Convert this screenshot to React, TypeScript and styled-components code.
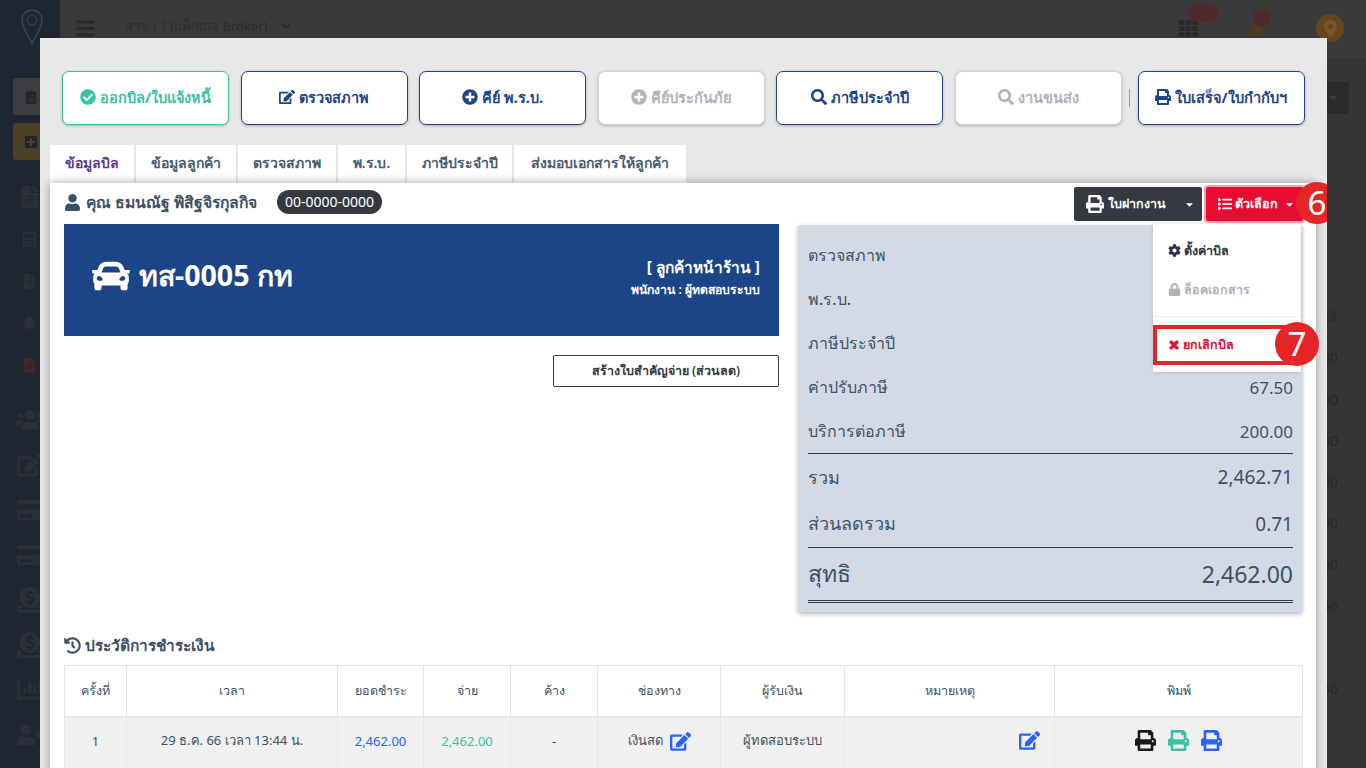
import React from 'react'
import styled, { createGlobalStyle } from 'styled-components'
import {
  FaBars, FaBell, FaCalculator, FaCar, FaCaretDown, FaChartBar, FaCheckCircle, FaChevronDown, FaClipboardList, FaCog,
  FaCreditCard, FaDonate, FaEdit, FaFileAlt, FaHistory, FaList, FaLock, FaMapMarkerAlt, FaPlusCircle, FaPlusSquare,
  FaPrint, FaSearch, FaTh, FaTimes, FaUser, FaUserPlus, FaUsers,
} from 'react-icons/fa'

const GlobalStyle = createGlobalStyle`
  html, body { margin: 0; padding: 0; height: 100%; }
  body { font-family: "Noto Sans", "Open Sans", "Liberation Sans", sans-serif; overflow: hidden; }
  * { box-sizing: border-box; }
`

const navy = '#1c4587'
const green = '#3cc2a3'
const slate = '#3d5166'
const muted = '#adb3b9'

const Page = styled.div`
  display: flex;
  width: 1366px;
  height: 768px;
  overflow: hidden;
  background: #343534;
`
const Sidebar = styled.aside`
  width: 60px;
  flex: none;
  background: #1e2631;
  display: flex;
  flex-direction: column;
  color: #2c3036;
`
const SideLogo = styled.div`
  height: 78px;
  padding: 9px 0 0 21px;
`
const SideBlock = styled.div<{ $bg: string }>`
  width: 47px;
  height: 37px;
  margin: 0 0 8px 13px;
  background: ${p => p.$bg};
  border-radius: 3px;
  display: flex;
  align-items: center;
  padding-left: 11px;
  font-size: 14px;
  color: #22262a;
`
const SideGroup = styled.div<{ $top: number }>`
  margin-top: ${p => p.$top}px;
`
const SideRow = styled.div<{ $h: number; $size: number; $tone?: string }>`
  height: ${p => p.$h}px;
  display: flex;
  align-items: center;
  justify-content: center;
  width: 60px;
  padding-right: ${p => (p.$size > 20 ? 0 : 1)}px;
  font-size: ${p => p.$size}px;
  color: ${p => p.$tone ?? 'inherit'};
`
const Main = styled.div`
  flex: 1;
  display: flex;
  flex-direction: column;
`
const TopBar = styled.header`
  height: 58px;
  flex: none;
  background: #3a3a3a;
  display: flex;
  align-items: flex-start;
  padding: 15px 22px 0 15px;
  color: #2a2a2a;
`
const Burger = styled.div`
  font-size: 21px;
  margin-top: 2px;
  margin-right: 29px;
`
const Branch = styled.div`
  font-size: 13px;
  line-height: 22px;
  margin-right: 14px;
  color: #2c2c2c;
`
const TopSpacer = styled.div`
  flex: 1;
`
const TopIcon = styled.div<{ $color: string; $right: number }>`
  position: relative;
  margin-right: ${p => p.$right}px;
  margin-top: 3px;
  font-size: 19px;
  color: ${p => p.$color};
`
const TopBadge = styled.span<{ $left: number; $top: number }>`
  position: absolute;
  left: ${p => p.$left}px;
  top: ${p => p.$top}px;
  min-width: 18px;
  height: 18px;
  padding: 0 6px;
  border-radius: 9px;
  background: #51282b;
  color: #3a3030;
  font-size: 10px;
  line-height: 18px;
  text-align: center;
  white-space: nowrap;
`
const Avatar = styled.div`
  width: 28px;
  height: 28px;
  margin-top: -1px;
  border-radius: 50%;
  background: #66451f;
  display: flex;
  align-items: center;
  justify-content: center;
  color: #7a5627;
  font-size: 17px;
`
const BackBody = styled.div`
  flex: 1;
  display: flex;
  flex-direction: column;
  align-items: flex-end;
  padding: 24px 17px 0 0;
`
const BackButton = styled.div`
  width: 60px;
  height: 32px;
  background: #2a2b2a;
  border-radius: 2px;
  display: flex;
  justify-content: flex-end;
  padding: 9px 9px 0 0;
  color: #3d3d3d;
  font-size: 13px;
`
const BackValues = styled.div`
  margin-top: 182px;
  padding-right: 11px;
  display: flex;
  flex-direction: column;
  align-items: flex-end;
  color: #272827;
  font-size: 14px;
  line-height: 41.3px;
`

const Modal = styled.section`
  position: fixed;
  left: 40px;
  top: 38px;
  width: 1287px;
  height: 730px;
  overflow: hidden;
  background: #e8e8e8;
  padding-top: 33px;
`
const Toolbar = styled.div`
  display: flex;
  align-items: center;
  gap: 11.5px;
  padding-left: 22px;
`
const ActionButton = styled.button<{ $tone: string; $faded?: boolean }>`
  flex: none;
  width: 167px;
  height: 54px;
  display: flex;
  align-items: center;
  justify-content: center;
  gap: 4px;
  background: #fff;
  border: 1px solid ${p => (p.$faded ? '#d3d3d3' : p.$tone)};
  border-radius: 7px;
  box-shadow: 0 1px 3px rgba(0, 0, 0, 0.25);
  color: ${p => p.$tone};
  font: 700 14.5px "Noto Sans", "Open Sans", sans-serif;
  padding: 0 0 2px;
  white-space: nowrap;
  svg { font-size: 16px; flex: none; }
`
const ToolDivider = styled.span`
  width: 1px;
  height: 18px;
  background: #9a9a9a;
  margin: 0 -4px;
`
const Tabs = styled.nav`
  display: flex;
  gap: 2px;
  margin: 20px 0 0 10px;
`
const Tab = styled.div<{ $active?: boolean; $w: number }>`
  width: ${p => p.$w}px;
  height: 38px;
  flex: none;
  background: #fff;
  color: ${p => (p.$active ? '#5b3b98' : '#4a5b72')};
  font-size: 14px;
  font-weight: ${p => (p.$active ? 700 : 600)};
  line-height: 36px;
  text-align: center;
  white-space: nowrap;
`
const Panel = styled.div`
  width: 1266px;
  margin-left: 10px;
  height: 600px;
  background: #fff;
  box-shadow: 0 0 9px rgba(0, 0, 0, 0.35);
  padding: 4px 13px 0 14px;
  position: relative;
`
const NameRow = styled.div`
  height: 34px;
  display: flex;
  align-items: center;
  margin-bottom: 3px;
`
const CustomerName = styled.h2`
  margin: 0 0 4px;
  display: flex;
  align-items: center;
  gap: 5px;
  width: 193px;
  color: ${slate};
  font-size: 15.7px;
  font-weight: 700;
  line-height: 24px;
  white-space: nowrap;
  svg { font-size: 17px; flex: none; }
`
const PhonePill = styled.span`
  margin: 0 0 4px 20px;
  width: 105px;
  height: 24px;
  border-radius: 12px;
  background: #343a40;
  color: #fff;
  font-size: 14px;
  line-height: 24px;
  text-align: center;
`
const RowActions = styled.div`
  margin-left: auto;
  display: flex;
  gap: 4px;
`
const PrintGroup = styled.button`
  width: 128px;
  height: 34px;
  background: #343a40;
  color: #fff;
  border: 0;
  border-radius: 2px;
  display: flex;
  align-items: center;
  padding: 0 7px 0 12px;
  font: 600 12.5px "Noto Sans", sans-serif;
  gap: 4px;
  svg:first-child { font-size: 18px; }
  svg:last-child { margin-left: auto; font-size: 11px; }
`
const OptionsWrap = styled.div`
  position: relative;
`
const OptionsButton = styled.button`
  width: 97px;
  height: 34px;
  background: #e80c35;
  color: #fff;
  border: 0;
  border-radius: 2px;
  box-shadow: 0 0 0 2px #f9a3ad;
  display: flex;
  align-items: center;
  padding: 0 0 0 12px;
  gap: 3px;
  font: 700 12.5px "Noto Sans", sans-serif;
  svg:first-child { font-size: 14px; }
  svg:last-child { font-size: 11px; margin-left: 3px; }
`
const Marker = styled.span<{ $x: number; $y: number; $d: number }>`
  position: absolute;
  left: ${p => p.$x}px;
  top: ${p => p.$y}px;
  width: ${p => p.$d}px;
  height: ${p => p.$d}px;
  border-radius: 50%;
  background: #e52528;
  color: #fff;
  font: 400 33px/${p => p.$d}px "Noto Sans", sans-serif;
  text-align: center;
  z-index: 3;
`
const Menu = styled.div`
  position: absolute;
  left: -53px;
  top: 37px;
  width: 148px;
  height: 148px;
  background: #fff;
  box-shadow: 0 1px 3px rgba(0, 0, 0, 0.12);
  padding-top: 7px;
  z-index: 2;
`
const MenuItem = styled.div<{ $tone: string; $h: number }>`
  height: ${p => p.$h}px;
  padding-left: 15px;
  display: flex;
  align-items: center;
  gap: 3px;
  color: ${p => p.$tone};
  font-size: 12.5px;
  font-weight: 600;
  svg { font-size: 13px; }
`
const MenuDivider = styled.div`
  height: 1px;
  margin-top: 7px;
  background: #f2f2f2;
`
const CancelItem = styled.div`
  height: 40px;
  width: 142px;
  margin-top: 8px;
  border: 4px solid #e52528;
  border-right-width: 0;
  padding-left: 11px;
  display: flex;
  align-items: center;
  gap: 3px;
  color: #e80c35;
  font-size: 12.5px;
  font-weight: 700;
  svg { font-size: 12px; stroke: currentColor; stroke-width: 50; }
`
const Columns = styled.div`
  display: grid;
  grid-template-columns: 715px 504px;
  column-gap: 19px;
  height: 388px;
`
const PlateCard = styled.div`
  height: 112px;
  background: ${navy};
  color: #fff;
  display: flex;
  align-items: center;
  justify-content: space-between;
  padding: 0 19px 0 28px;
`
const PlateTitle = styled.div`
  display: flex;
  align-items: center;
  gap: 9px;
  font-size: 28.6px;
  font-weight: 700;
  margin-bottom: 8px;
  svg { font-size: 38px; }
`
const PlateInfo = styled.div`
  text-align: right;
  margin-bottom: 4px;
`
const PlateCustomer = styled.div`
  font-size: 15.5px;
  font-weight: 700;
  line-height: 24px;
`
const PlateStaff = styled.div`
  font-size: 12.2px;
  font-weight: 600;
  line-height: 22px;
`
const VoucherRow = styled.div`
  display: flex;
  justify-content: flex-end;
  margin-top: 19px;
`
const VoucherButton = styled.button`
  width: 226px;
  height: 32px;
  background: #fff;
  border: 1px solid #343a40;
  border-radius: 2px;
  color: #343a40;
  font: 600 12.5px "Noto Sans", sans-serif;
`
const Summary = styled.div`
  margin-top: 1px;
  height: 387px;
  background: #d3dae6;
  box-shadow: 0 2px 5px rgba(0, 0, 0, 0.3);
  border-radius: 2px;
  padding: 8px 9px 0 10px;
  color: ${slate};
`
const SummaryRow = styled.div<{ $h: number; $size: number; $line?: string }>`
  height: ${p => p.$h}px;
  display: flex;
  align-items: center;
  justify-content: space-between;
  font-size: ${p => p.$size}px;
  font-weight: 500;
  border-bottom: ${p => p.$line ?? 'none'};
`
const Amount = styled.span<{ $size: number }>`
  font-size: ${p => p.$size}px;
  font-weight: 400;
`
const HistoryTitle = styled.h3`
  margin: 21px 0 8px;
  display: flex;
  align-items: center;
  gap: 4px;
  height: 24px;
  color: ${slate};
  font-size: 15.4px;
  font-weight: 700;
  svg { font-size: 17px; }
`
const PayTable = styled.table`
  width: 1238px;
  border-collapse: collapse;
  table-layout: fixed;
  color: ${slate};
  font-size: 13px;
`
const Col = styled.col<{ $w: number }>`
  width: ${p => p.$w}px;
`
const Th = styled.th`
  height: 51px;
  border: 1px solid #e3e6ea;
  border-bottom-width: 2px;
  background: #fff;
  font-size: 12.5px;
  font-weight: 500;
  text-align: center;
  padding: 0;
`
const Td = styled.td<{ $tone?: string; $align?: string }>`
  height: 72px;
  border: 1px solid #e3e6ea;
  background: #f0f0f0;
  text-align: ${p => p.$align ?? 'center'};
  color: ${p => p.$tone ?? slate};
  padding: ${p => (p.$align === 'right' ? '0 14px 24px 0' : '0 0 24px')};
`
const CellIcon = styled.span<{ $tone: string }>`
  display: inline-flex;
  vertical-align: middle;
  margin-left: 7px;
  font-size: 21px;
  color: ${p => p.$tone};
`
const PrintIcons = styled.div`
  display: flex;
  justify-content: center;
  gap: 12px;
`
const PrintIcon = styled.span<{ $tone: string }>`
  display: inline-flex;
  font-size: 21px;
  color: ${p => p.$tone};
`

const tabs = [
  { label: 'ข้อมูลบิล', w: 84, active: true },
  { label: 'ข้อมูลลูกค้า', w: 100 },
  { label: 'ตรวจสภาพ', w: 98 },
  { label: 'พ.ร.บ.', w: 67 },
  { label: 'ภาษีประจำปี', w: 105 },
  { label: 'ส่งมอบเอกสารให้ลูกค้า', w: 172 },
]
const columns = [
  { label: 'ครั้งที่', w: 62 },
  { label: 'เวลา', w: 211 },
  { label: 'ยอดชำระ', w: 86 },
  { label: 'จ่าย', w: 87 },
  { label: 'ค้าง', w: 87 },
  { label: 'ช่องทาง', w: 123 },
  { label: 'ผู้รับเงิน', w: 124 },
  { label: 'หมายเหตุ', w: 210 },
  { label: 'พิมพ์', w: 248 },
]
const backValues = ['ทธิ', '00', '00', '00', '00', '00', '00', '46', '', '46']

export default function App() {
  return (
    <Page>
      <GlobalStyle />
      <Sidebar>
        <SideLogo>
          <svg width="22" height="36" viewBox="0 0 22 36" fill="none" stroke="#383e44" strokeWidth="2">
            <path d="M11 34 C7 26 1 19 1 11 a10 10 0 0 1 20 0 C21 19 15 26 11 34 Z" />
            <circle cx="11" cy="11" r="5" strokeWidth="1.2" />
          </svg>
        </SideLogo>
        <SideBlock $bg="#3c3d3e"><FaClipboardList /></SideBlock>
        <SideBlock $bg="#4c4029"><FaPlusSquare /></SideBlock>
        <SideGroup $top={8}>
          <SideRow $h={42} $size={22}><FaFileAlt /></SideRow>
          <SideRow $h={42} $size={15}><FaCalculator /></SideRow>
          <SideRow $h={42} $size={15}><FaFileAlt /></SideRow>
          <SideRow $h={42} $size={15}><FaBell /></SideRow>
          <SideRow $h={42} $size={15} $tone="#46252a"><FaFileAlt /></SideRow>
        </SideGroup>
        <SideGroup $top={11}>
          <SideRow $h={45} $size={28}><FaUsers /></SideRow>
          <SideRow $h={45} $size={26}><FaEdit /></SideRow>
          <SideRow $h={45} $size={26}><FaCreditCard /></SideRow>
          <SideRow $h={45} $size={26}><FaCreditCard /></SideRow>
          <SideRow $h={45} $size={26}><FaDonate /></SideRow>
          <SideRow $h={45} $size={26}><FaDonate /></SideRow>
          <SideRow $h={45} $size={26}><FaChartBar /></SideRow>
          <SideRow $h={45} $size={26}><FaUserPlus /></SideRow>
        </SideGroup>
      </Sidebar>
      <Main>
        <TopBar>
          <Burger><FaBars /></Burger>
          <Branch>สาขา 1 (แพ็กเกจ Broker)</Branch>
          <Branch><FaChevronDown size={10} /></Branch>
          <TopSpacer />
          <TopIcon $color="#2a2a2a" $right={49}>
            <FaTh />
            <TopBadge $left={9} $top={-14}>ใหม่</TopBadge>
          </TopIcon>
          <TopIcon $color="#4d3b1e" $right={50}>
            <FaBell />
            <TopBadge $left={6} $top={-9}>1</TopBadge>
          </TopIcon>
          <Avatar><FaMapMarkerAlt /></Avatar>
        </TopBar>
        <BackBody>
          <BackButton><FaCaretDown /></BackButton>
          <BackValues>
            {backValues.map((v, i) => <div key={i}>{v || '\u00a0'}</div>)}
          </BackValues>
        </BackBody>
      </Main>

      <Modal>
        <Toolbar>
          <ActionButton $tone={green}><FaCheckCircle />ออกบิล/ใบแจ้งหนี้</ActionButton>
          <ActionButton $tone={navy}><FaEdit />ตรวจสภาพ</ActionButton>
          <ActionButton $tone={navy}><FaPlusCircle />คีย์ พ.ร.บ.</ActionButton>
          <ActionButton $tone={muted} $faded><FaPlusCircle />คีย์ประกันภัย</ActionButton>
          <ActionButton $tone={navy}><FaSearch />ภาษีประจำปี</ActionButton>
          <ActionButton $tone={muted} $faded><FaSearch />งานขนส่ง</ActionButton>
          <ToolDivider />
          <ActionButton $tone={navy}><FaPrint />ใบเสร็จ/ใบกำกับฯ</ActionButton>
        </Toolbar>
        <Tabs>
          {tabs.map(t => <Tab key={t.label} $w={t.w} $active={t.active}>{t.label}</Tab>)}
        </Tabs>
        <Panel>
          <NameRow>
            <CustomerName><FaUser />คุณ ธมนณัฐ พิสิฐจิรกุลกิจ</CustomerName>
            <PhonePill>00-0000-0000</PhonePill>
            <RowActions>
              <PrintGroup><FaPrint />ใบฝากงาน<FaCaretDown /></PrintGroup>
              <OptionsWrap>
                <OptionsButton><FaList />ตัวเลือก<FaCaretDown /></OptionsButton>
                <Marker $x={90} $y={-5} $d={42}>6</Marker>
                <Menu>
                  <MenuItem $tone="#2b3440" $h={39}><FaCog />ตั้งค่าบิล</MenuItem>
                  <MenuItem $tone={muted} $h={39}><FaLock />ล็อคเอกสาร</MenuItem>
                  <MenuDivider />
                  <CancelItem><FaTimes />ยกเลิกบิล</CancelItem>
                </Menu>
                <Marker $x={69} $y={135} $d={44}>7</Marker>
              </OptionsWrap>
            </RowActions>
          </NameRow>
          <Columns>
            <div>
              <PlateCard>
                <PlateTitle><FaCar />ทส-0005 กท</PlateTitle>
                <PlateInfo>
                  <PlateCustomer>[ ลูกค้าหน้าร้าน ]</PlateCustomer>
                  <PlateStaff>พนักงาน : ผู้ทดสอบระบบ</PlateStaff>
                </PlateInfo>
              </PlateCard>
              <VoucherRow>
                <VoucherButton>สร้างใบสำคัญจ่าย (ส่วนลด)</VoucherButton>
              </VoucherRow>
            </div>
            <Summary>
              <SummaryRow $h={44} $size={16}>ตรวจสภาพ</SummaryRow>
              <SummaryRow $h={44} $size={16}>พ.ร.บ.</SummaryRow>
              <SummaryRow $h={44} $size={16}>ภาษีประจำปี</SummaryRow>
              <SummaryRow $h={44} $size={16}><span>ค่าปรับภาษี</span><Amount $size={17}>67.50</Amount></SummaryRow>
              <SummaryRow $h={45} $size={16} $line="1px solid #2f3d4c"><span>บริการต่อภาษี</span><Amount $size={17}>200.00</Amount></SummaryRow>
              <SummaryRow $h={46} $size={18}><span>รวม</span><Amount $size={19}>2,462.71</Amount></SummaryRow>
              <SummaryRow $h={48} $size={18} $line="1px solid #2f3d4c"><span>ส่วนลดรวม</span><Amount $size={19}>0.71</Amount></SummaryRow>
              <SummaryRow $h={55} $size={23} $line="3px double #2f3d4c"><span>สุทธิ</span><Amount $size={23}>2,462.00</Amount></SummaryRow>
            </Summary>
          </Columns>
          <HistoryTitle><FaHistory />ประวัติการชำระเงิน</HistoryTitle>
          <PayTable>
            <colgroup>
              {columns.map(c => <Col key={c.label} $w={c.w} />)}
            </colgroup>
            <thead>
              <tr>{columns.map(c => <Th key={c.label}>{c.label}</Th>)}</tr>
            </thead>
            <tbody>
              <tr>
                <Td>1</Td>
                <Td>29 ธ.ค. 66 เวลา 13:44 น.</Td>
                <Td $tone="#2962ff">2,462.00</Td>
                <Td $tone={green}>2,462.00</Td>
                <Td>-</Td>
                <Td>เงินสด<CellIcon $tone="#2962ff"><FaEdit /></CellIcon></Td>
                <Td>ผู้ทดสอบระบบ</Td>
                <Td $align="right"><CellIcon $tone="#2962ff"><FaEdit /></CellIcon></Td>
                <Td>
                  <PrintIcons>
                    <PrintIcon $tone="#1a1a1a"><FaPrint /></PrintIcon>
                    <PrintIcon $tone={green}><FaPrint /></PrintIcon>
                    <PrintIcon $tone="#2962ff"><FaPrint /></PrintIcon>
                  </PrintIcons>
                </Td>
              </tr>
            </tbody>
          </PayTable>
        </Panel>
      </Modal>
    </Page>
  )
}
